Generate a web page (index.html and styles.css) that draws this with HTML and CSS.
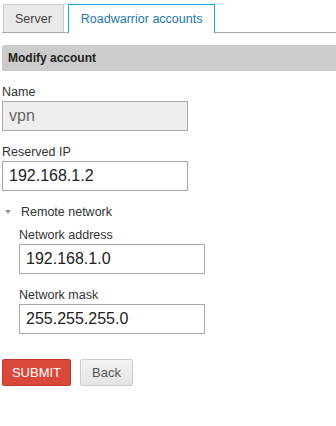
FILE: index.html
```html
<!DOCTYPE html>
<html lang="en">
<head>
    <meta charset="UTF-8">
    <meta name="viewport" content="width=device-width, initial-scale=1.0">
    <title>Roadwarrior accounts</title>
    <link rel="stylesheet" href="styles.css">
</head>
<body>
    <div class="tabs">
        <a class="tab">Server</a>
        <a class="tab active">Roadwarrior accounts</a>
    </div>

    <div class="panel-header">Modify account</div>

    <form class="form">
        <div class="field">
            <label>Name</label>
            <input type="text" class="input" value="vpn" disabled>
        </div>
        <div class="field">
            <label>Reserved IP</label>
            <input type="text" class="input" value="192.168.1.2">
        </div>

        <div class="section">
            <div class="section-title"><span class="arrow"></span>Remote network</div>
            <div class="section-body">
                <div class="field">
                    <label>Network address</label>
                    <input type="text" class="input" value="192.168.1.0">
                </div>
                <div class="field">
                    <label>Network mask</label>
                    <input type="text" class="input" value="255.255.255.0">
                </div>
            </div>
        </div>

        <div class="actions">
            <button type="button" class="button submit">SUBMIT</button>
            <button type="button" class="button back">Back</button>
        </div>
    </form>
</body>
</html>
```

FILE: styles.css
```css
body {
    font-family: 'Liberation Sans', Arial, sans-serif;
    font-size: 12px;
    color: #333;
    background: #fff;
    margin: 0;
}
.tabs {
    display: flex;
    gap: 4px;
    margin: 4px 0 0 2px;
    padding-left: 1px;
    border-bottom: 1px solid #aaa;
    height: 28px;
}
.tab {
    display: flex;
    align-items: center;
    justify-content: center;
    height: 28px;
    box-sizing: border-box;
    padding: 0 11px;
    background: #e9e9e9;
    border: 1px solid #ccc;
    border-bottom: none;
    color: #444;
    font-size: 12.5px;
}
.tab.active {
    background: #fff;
    border-color: #17a3dc;
    color: #1d78a6;
    height: 29px;
    padding: 0 12px 1px;
}
.panel-header {
    margin: 12px 0 0 2px;
    height: 26px;
    line-height: 26px;
    padding-left: 6px;
    background: #ccc;
    border-radius: 2px 0 0 2px;
    font-weight: bold;
    color: #222;
}
.form {
    padding: 13px 0 0 2px;
}
.field {
    margin-bottom: 13px;
}
.field label {
    display: block;
    line-height: 16px;
    margin-bottom: 1px;
    font-size: 12.5px;
}
.input {
    display: block;
    width: 186px;
    height: 30px;
    box-sizing: border-box;
    border: 1px solid #a9a9a9;
    padding: 0 6px;
    font-family: 'Liberation Sans', Arial, sans-serif;
    font-size: 16px;
    color: #222;
    background: #fff;
    margin: 0;
}
.input:disabled {
    background: #eee;
    color: #666;
}
.section-title {
    line-height: 16px;
    display: flex;
    align-items: center;
    color: #333;
    font-size: 12.5px;
}
.arrow {
    width: 0;
    height: 0;
    border-left: 3px solid transparent;
    border-right: 3px solid transparent;
    border-top: 4px solid #999;
    margin: 0 10px 0 3px;
}
.section-body {
    padding: 7px 0 0 17px;
}
.actions {
    display: flex;
    gap: 9px;
    margin-top: 25px;
}
.button {
    height: 27px;
    box-sizing: border-box;
    font-family: 'Liberation Sans', Arial, sans-serif;
    font-size: 13px;
    border-radius: 2px;
    padding: 0;
    cursor: pointer;
}
.button.submit {
    width: 69px;
    background: #d9483b;
    border: 1px solid #c53727;
    color: #fff;
}
.button.back {
    width: 53px;
    background: linear-gradient(#f3f3f3, #e4e4e4);
    border: 1px solid #ccc;
    color: #555;
}
```
